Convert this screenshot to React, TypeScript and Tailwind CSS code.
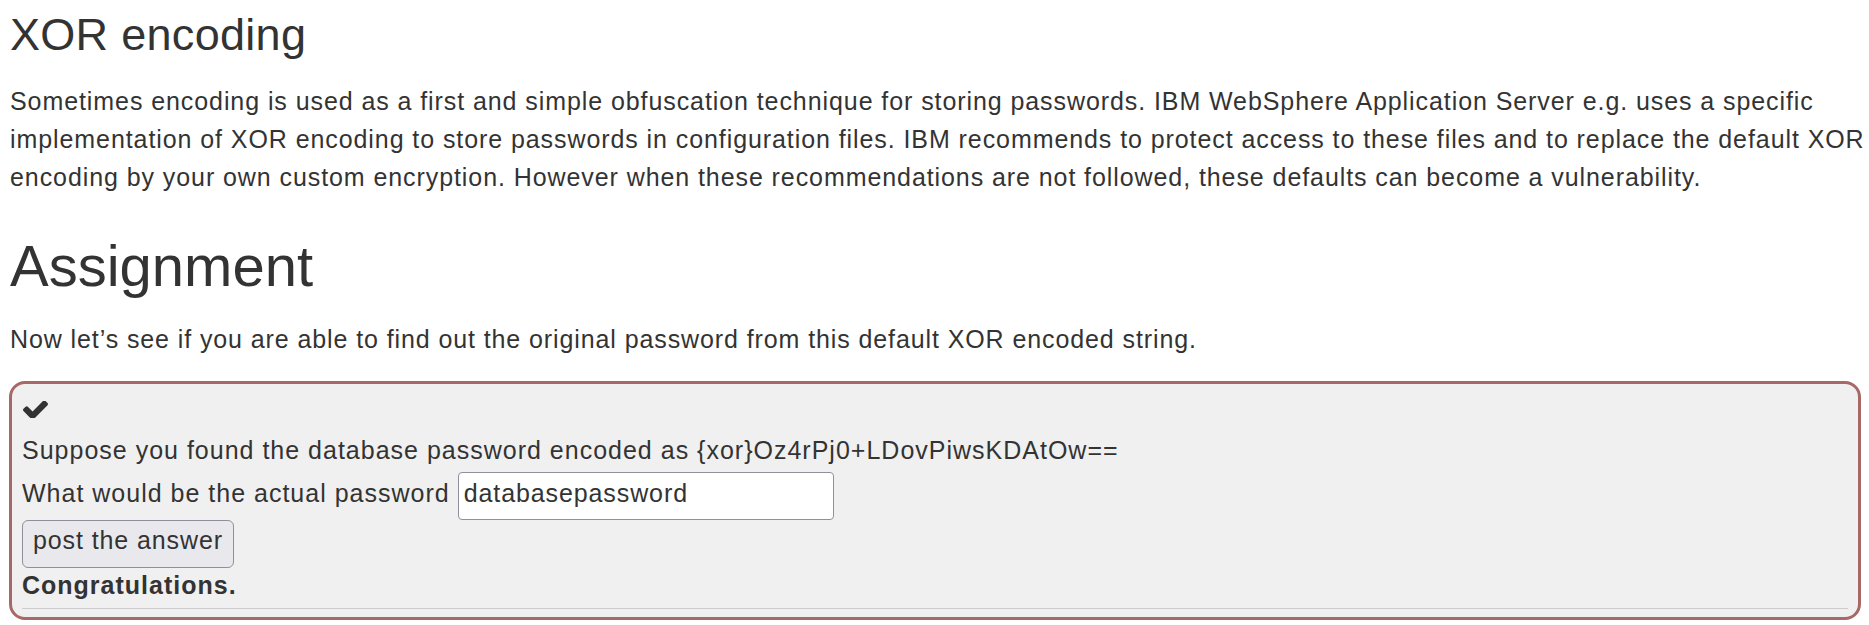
export default function App() {
    return (
        <div className="min-h-screen bg-white pl-[10px] pr-[4px] pt-[10px] font-['Liberation_Sans',Arial,sans-serif] text-[#333]">
            <h2 className="text-[45px] leading-[1.1] tracking-[0.3px]">XOR encoding</h2>
            <p className="mt-[22px] text-[25px] leading-[38.4px] tracking-[0.92px]">
                Sometimes encoding is used as a first and simple obfuscation technique for storing passwords. IBM WebSphere
                Application Server e.g. uses a specific implementation of XOR encoding to store passwords in configuration files.
                IBM recommends to protect access to these files and to replace the default XOR encoding by your own custom
                encryption. However when these recommendations are not followed, these defaults can become a vulnerability.
            </p>

            <h1 className="mt-[37px] text-[58px] leading-[1.1]">Assignment</h1>
            <p className="mt-[22px] text-[25px] leading-[38.4px] tracking-[0.9px]">
                Now let’s see if you are able to find out the original password from this default XOR encoded string.
            </p>

            <div className="mt-[23px] -ml-px mr-[4px] rounded-[16px] border-[3px] border-[#a86868] bg-[#f0f0f0] px-[10px] pt-[17px] pb-[8px] text-[25px] leading-[32px] tracking-[1px]">
                <svg width="25" height="17" viewBox="121 374 1550 1052" className="ml-px block" fill="#333">
                    <path d="M1671 566q0 40-28 68l-724 724-136 136q-28 28-68 28t-68-28l-136-136-362-362q-28-28-28-68t28-68l136-136q28-28 68-28t68 28l294 295 656-657q28-28 68-28t68 28l136 136q28 28 28 68z" />
                </svg>
                <div className="mt-[16px]">Suppose you found the database password encoded as {"{xor}"}Oz4rPj0+LDovPiwsKDAtOw==</div>
                <div className="mt-[6px] flex h-[48px] items-center gap-[8px]">
                    <span className="pb-[5px]">What would be the actual password</span>
                    <input
                        type="text"
                        readOnly
                        value="databasepassword"
                        className="h-[48px] w-[376px] rounded-[4px] border border-[#8f8f9d] bg-white px-[5px] pb-[5px] text-[25px] tracking-[0.9px] text-[#333] outline-none"
                    />
                </div>
                <button className="block h-[48px] rounded-[6px] border border-[#8f8f9d] bg-[#e9e9ed] px-[10px] pb-[8px] text-[25px] leading-[28px] tracking-[0.9px] text-[#333]">
                    post the answer
                </button>
                <div className="mt-px font-bold">Congratulations.</div>
                <hr className="mt-[7px] border-t border-[#ccc]" />
            </div>
        </div>
    );
}
